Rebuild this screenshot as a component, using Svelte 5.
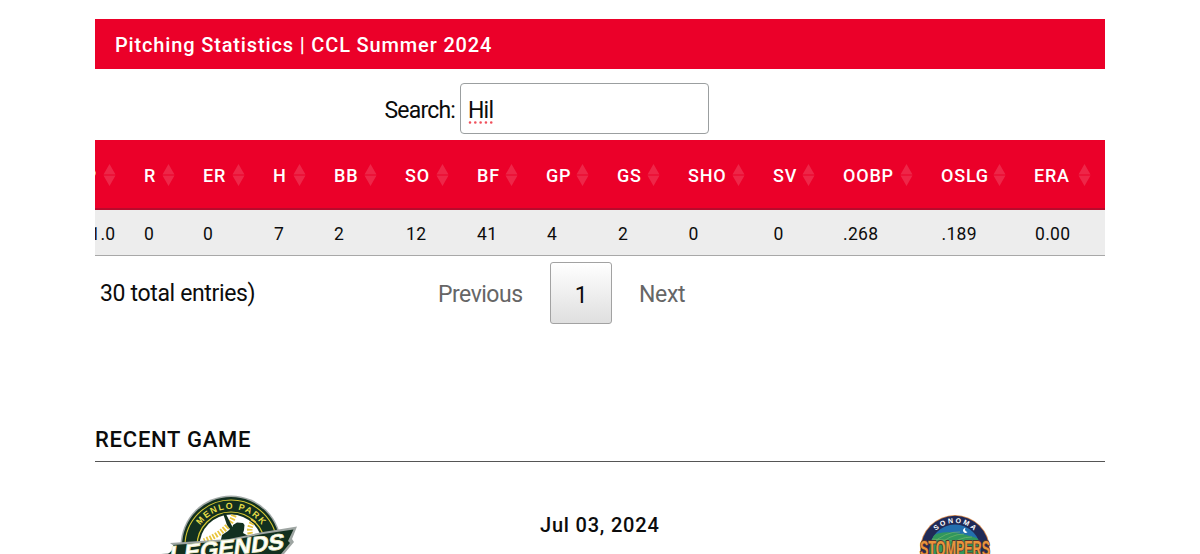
<script>
  const columns = [
    { key: 'IP', value: '1.0', width: 35, nudge: 0 },
    { key: 'R', value: '0', width: 59, nudge: 0 },
    { key: 'ER', value: '0', width: 70, nudge: 0 },
    { key: 'H', value: '7', width: 61, nudge: 1 },
    { key: 'BB', value: '2', width: 71, nudge: 0 },
    { key: 'SO', value: '12', width: 72, nudge: 1 },
    { key: 'BF', value: '41', width: 69, nudge: 0 },
    { key: 'GP', value: '4', width: 71, nudge: 1 },
    { key: 'GS', value: '2', width: 71, nudge: 1 },
    { key: 'SHO', value: '0', width: 85, nudge: 0.5 },
    { key: 'SV', value: '0', width: 70, nudge: 0.5 },
    { key: 'OOBP', value: '.268', width: 98, nudge: 0 },
    { key: 'OSLG', value: '.189', width: 93, nudge: 0.5 },
    { key: 'ERA', value: '0.00', width: 85, nudge: 1 }
  ];
  const template = columns.map((c) => `${c.width}px`).join(' ');
  let query = $state('Hil');
</script>

<main>
  <h2 class="title">Pitching Statistics | CCL Summer 2024</h2>

  <div class="search">
    <span class="label">Search:</span>
    <div class="field"><span class="typed">{query}<svg class="squiggle" width="26" height="3" viewBox="0 0 26 3"><path d="M2 1.500H25" stroke="#f0505c" stroke-width="2.600" stroke-linecap="round" stroke-dasharray="0.01 5.300" /></svg></span></div>
  </div>

  <div class="table">
    <div class="row head" style="grid-template-columns: {template}">
      {#each columns as c, i}
        <div class="cell" class:clipped={i === 0}>
          <span>{c.key}</span>
          <svg width="13" height="22" viewBox="0 0 13 22"><path d="M6.500 0 12.500 10.500H.5zM.5 11.500h12L6.500 22z" fill="#fff" fill-opacity=".15" /></svg>
        </div>
      {/each}
    </div>
    <div class="row body" style="grid-template-columns: {template}">
      {#each columns as c, i}
        <div class="cell" class:clipped={i === 0} style="text-indent: {c.nudge}px"><span>{c.value}</span></div>
      {/each}
    </div>
  </div>

  <div class="footer">
    <span class="info">30 total entries)</span>
    <span class="prev">Previous</span>
    <span class="page">1</span>
    <span class="next">Next</span>
  </div>

  <h3 class="recent">RECENT GAME</h3>

  <div class="game">
    <svg class="legends" width="138" height="61" viewBox="0 0 138 61">
      <circle cx="70" cy="53" r="50.500" fill="#a4aaa8" />
      <circle cx="70" cy="53" r="49" fill="#12301f" />
      <circle cx="70" cy="53" r="46" fill="none" stroke="#d8c832" stroke-width="1.100" />
      <circle cx="70" cy="53" r="31.500" fill="#fff" />
      <circle cx="70" cy="53" r="34" fill="none" stroke="#d8c832" stroke-width="1.200" />
      <path id="legends-arc" d="M33 53a37 37 0 0 1 74 0" fill="none" />
      <text font-size="8.800" font-weight="700" fill="#e6dc48" letter-spacing="1.500"><textPath href="#legends-arc" startOffset="50.500%" text-anchor="middle">MENLO PARK</textPath></text>
      <path d="M73 22Q68 38 43 48M93 27Q85 37 92 46" fill="none" stroke="#e8c53c" stroke-width="5.500" stroke-dasharray="1.800 1.500" />
      <path d="M62 20.500 64.500 20l7 14 .5-2 4-2.500 6 .5 1.500 2-.5 5-1 3 5.500 3 3 8H59l2-9 6-4 2-2-3-4z" fill="#12301f" />
      <path d="M9 50 68 46 102 39 136 33.500 131 46 133 49 123 61H0L9 60 13 53z" fill="#9ea5a2" />
      <path d="M12 52 68 48 102 41 132.500 36.500 127 48 129 50 120 61H7L14 55z" fill="#12301f" />
      <text transform="translate(8 69) rotate(-6.500) skewX(-14)" font-size="22" font-weight="900" textLength="115" lengthAdjust="spacingAndGlyphs" fill="#fff" stroke="#f0f0c8" stroke-width=".8">LEGENDS</text>
    </svg>
    <span class="date">Jul 03, 2024</span>
    <svg class="stompers" width="76" height="42" viewBox="0 0 76 42">
      <defs><clipPath id="hill-clip"><circle cx="37" cy="38" r="25.500" /></clipPath></defs>
      <circle cx="37" cy="38" r="35" fill="#d98a4c" />
      <circle cx="37" cy="38" r="34.200" fill="#202a57" />
      <g clip-path="url(#hill-clip)">
        <path d="M10 10h58v34H10z" fill="#236fae" />
        <path d="M10 26Q28 13 66 29v15H10z" fill="#31975c" />
        <path d="M12 33Q28 19 42 20M18 35Q32 22 46 22M30 35Q40 25 54 25M13 27Q33 28 65 33" stroke="#72b56a" stroke-width=".7" fill="none" />
      </g>
      <path d="M47.500 16a2.500 2.500 0 1 0 2 4 2.500 2.500 0 0 1-2-4" fill="#fff" />
      <path id="sonoma-arc" d="M10 38a27 27 0 0 1 54 0" fill="none" />
      <text font-size="7" font-weight="700" fill="#fff" letter-spacing="2.100"><textPath href="#sonoma-arc" startOffset="51%" text-anchor="middle">SONOMA</textPath></text>
      <text x="2" y="44" font-size="22" font-weight="900" textLength="70" lengthAdjust="spacingAndGlyphs" fill="#ea943c" stroke="#54352d" stroke-width="1.800" paint-order="stroke">STOMPERS</text>
    </svg>
  </div>
</main>

<style>
  :global(body) { background: #fff; overflow: hidden; }
  main { box-sizing: border-box; width: 1200px; height: 554px; overflow: hidden; padding: 19px 95px 0; font-family: Roboto, "Open Sans", sans-serif; color: #0c0c0c; background: #fff; }
  h2, h3 { margin: 0; }
  .title { height: 50px; box-sizing: border-box; padding-left: 20px; background: #eb0029; color: #fff; font-size: 20px; line-height: 52px; font-weight: 500; letter-spacing: .85px; }
  .search { display: flex; height: 71px; padding-left: 289.500px; }
  .label { width: 75.500px; font-size: 23px; line-height: 83px; letter-spacing: -.8px; }
  .field { box-sizing: border-box; width: 249px; height: 51px; margin-top: 14px; padding-left: 7px; border: 1px solid #9b9fa0; border-radius: 4px; font-size: 23px; line-height: 53px; letter-spacing: -.8px; }
  .typed { position: relative; display: inline-block; }
  .squiggle { position: absolute; left: 0; top: 37px; }
  .table { width: 1010px; overflow: hidden; }
  .row { display: grid; }
  .head { height: 70px; box-sizing: border-box; background: #eb0029; color: #fff; border-bottom: 2px solid #b80a2c; font-size: 18px; font-weight: 500; letter-spacing: .8px; }
  .cell { display: flex; align-items: center; justify-content: space-between; padding: 0 14.500px 0 14px; white-space: nowrap; }
  .head .cell { padding-top: 2px; }
  .cell svg { flex: none; }
  .body { height: 46px; box-sizing: border-box; background: #ededed; border-bottom: 1px solid #a8a8a8; font-size: 17.500px; letter-spacing: .3px; }
  .body .cell { padding-top: 3px; }
  .clipped { justify-content: flex-end; }
  .head .clipped span { margin-right: 5.500px; }
  .footer { display: flex; align-items: flex-start; padding-top: 6px; height: 68px; box-sizing: border-box; font-size: 23px; line-height: 65px; letter-spacing: -.35px; }
  .info { width: 338px; padding-left: 5px; line-height: 63px; }
  .prev { width: 112px; color: #666; letter-spacing: -.5px; }
  .page { box-sizing: border-box; width: 62px; height: 62px; border: 1px solid #a2a2a2; border-radius: 3px; text-align: center; background: linear-gradient(#fff, #dfdfdf); }
  .next { padding-left: 27px; color: #666; }
  .recent { margin-top: 98px; height: 39px; border-bottom: 1px solid #555; font-size: 22px; line-height: 35px; font-weight: 500; letter-spacing: .75px; }
  .game { display: flex; align-items: flex-start; height: 92px; }
  .game svg { flex: none; font-family: "Liberation Sans", sans-serif; }
  .legends { margin: 31px 0 0 66px; }
  .date { width: 378px; margin-left: 241px; padding-top: 49px; line-height: 28px; font-size: 20px; font-weight: 500; letter-spacing: .8px; }
  .stompers { margin-top: 50px; }
</style>
